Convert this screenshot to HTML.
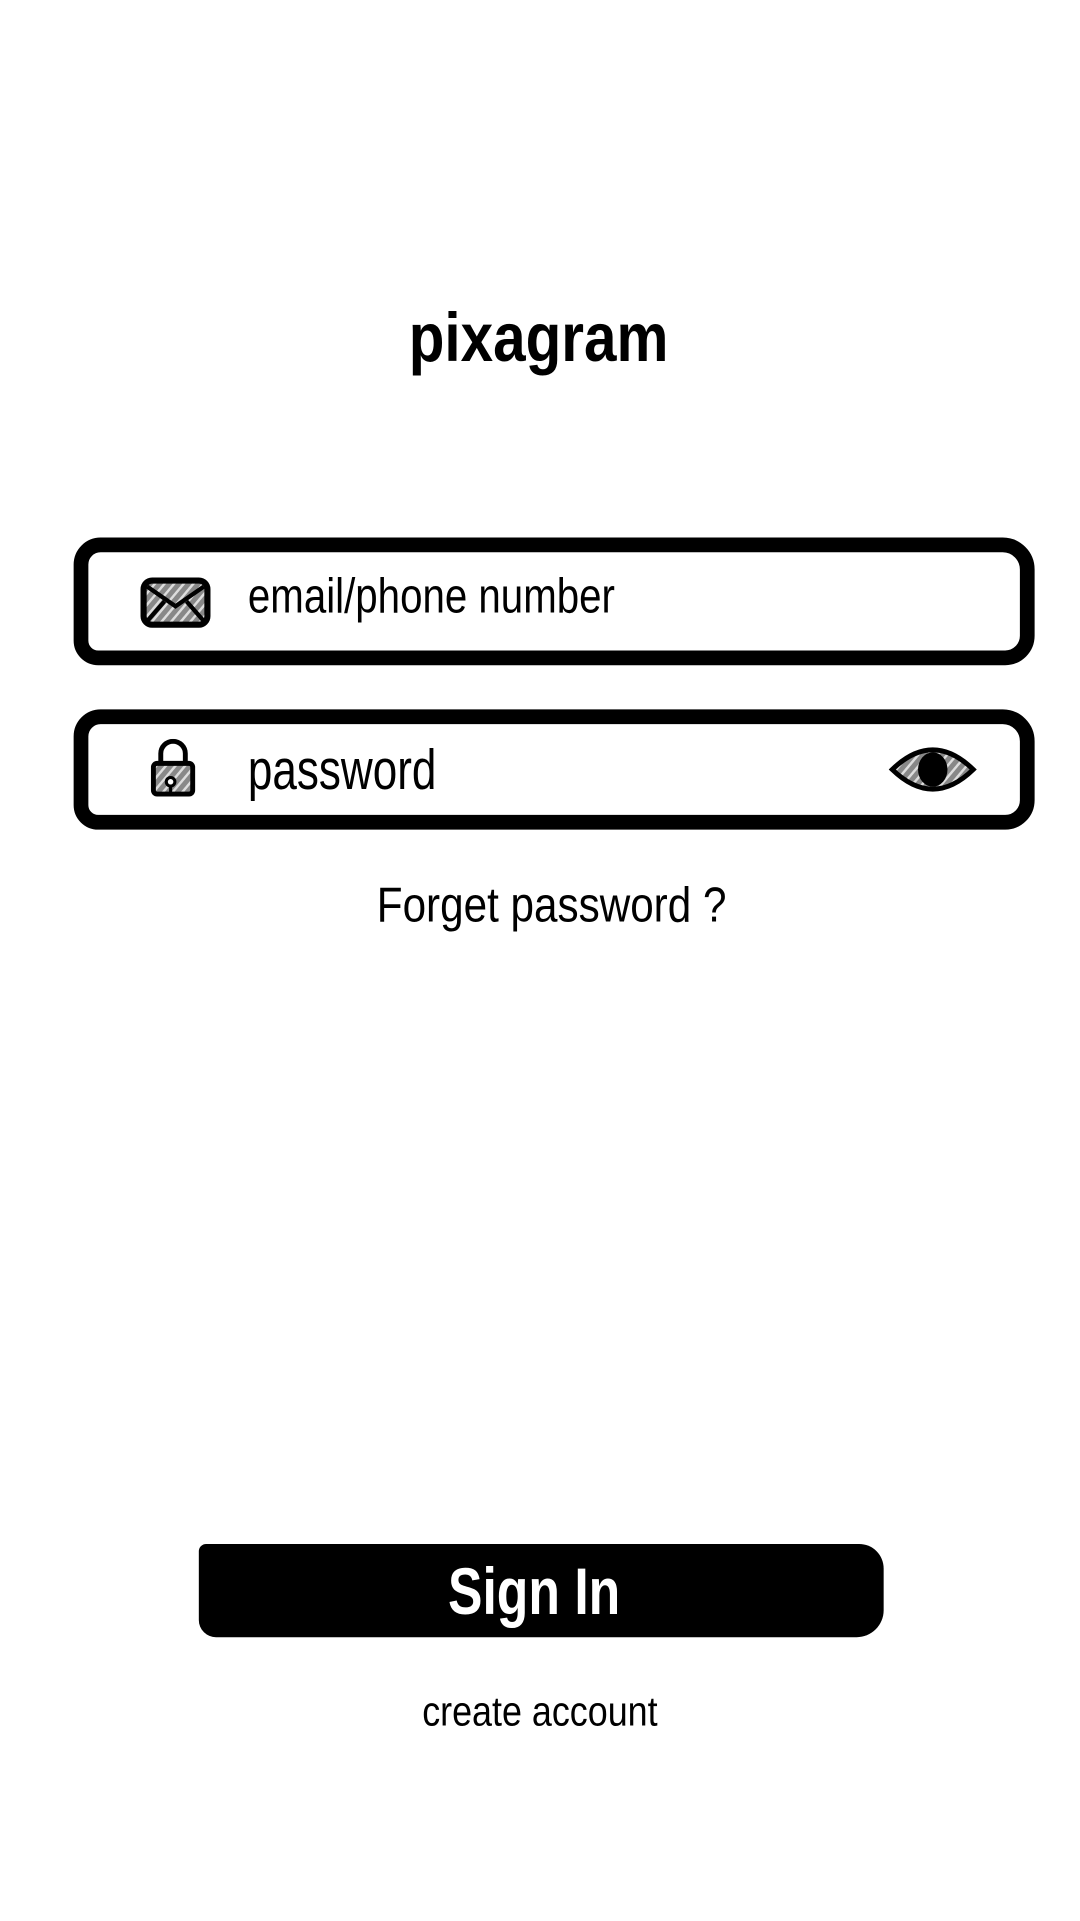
<!DOCTYPE html>
<html><head><meta charset="utf-8"><style>
html,body{margin:0;padding:0;background:#fff;width:1080px;height:1920px;overflow:hidden}
#w{position:absolute;left:0;top:0;width:880px;height:1565px;transform:scale(1.2273);transform-origin:0 0;font-family:"Liberation Sans",sans-serif;color:#000}
.t{position:absolute;white-space:nowrap;transform-origin:0 0}
.box{position:absolute;left:60px;width:783px;border:12px solid #000;border-radius:22px 26px 24px 20px;box-sizing:border-box;background:#fff}
</style></head><body><div id="w">
<div class="t" style="left:333px;top:242px;font-size:56px;font-weight:bold;transform:scaleX(0.85)">pixagram</div>

<div class="box" style="top:438px;height:104px"></div>
<svg style="position:absolute;left:114px;top:470px" width="58" height="42" viewBox="0 0 58 42">
<defs><pattern id="h" width="6" height="6" patternUnits="userSpaceOnUse" patternTransform="rotate(40)"><rect width="6" height="6" fill="#888"/><rect width="2" height="6" fill="#ddd"/></pattern></defs>
<rect x="3" y="3" width="52" height="36" rx="7" fill="url(#h)" stroke="#000" stroke-width="5"/>
<path d="M6 8 L29 24 L52 8 M6 36 L20 20 M52 36 L38 20" stroke="#000" stroke-width="3.5" fill="none"/>
</svg>
<div class="t" style="left:202px;top:464px;font-size:40px;transform:scaleX(0.82)">email/phone number</div>

<div class="box" style="top:578px;height:98px"></div>
<svg style="position:absolute;left:121px;top:602px" width="40" height="48" viewBox="0 0 40 48">
<path d="M10 20 V12 a10 10 0 0 1 20 0 V20" stroke="#000" stroke-width="4" fill="none"/>
<rect x="4" y="20" width="32" height="25" rx="3" fill="url(#h)" stroke="#000" stroke-width="4"/>
<circle cx="18" cy="35" r="3.5" fill="#fff" stroke="#000" stroke-width="2.5"/>
<path d="M18 38 V44" stroke="#000" stroke-width="2.5"/>
</svg>
<div class="t" style="left:202px;top:600px;font-size:46px;transform:scaleX(0.78)">password</div>
<svg style="position:absolute;left:724px;top:605px" width="72" height="44" viewBox="0 0 72 44">
<path d="M3 22 Q36 -10 69 22 Q36 54 3 22Z" fill="url(#h)" stroke="#000" stroke-width="4"/>
<ellipse cx="36" cy="22" rx="12" ry="14" fill="#000"/>
</svg>

<div class="t" style="left:307px;top:716px;font-size:40px;transform:scaleX(0.86)">Forget password ?</div>

<div style="position:absolute;left:162px;top:1258px;width:558px;height:76px;background:#000;border-radius:6px 20px 22px 14px"></div>
<div class="t" style="left:365px;top:1266px;font-size:54px;font-weight:bold;color:#fff;transform:scaleX(0.78)">Sign In</div>

<div class="t" style="left:344px;top:1376px;font-size:34px;transform:scaleX(0.86)">create account</div>
</div></body></html>
